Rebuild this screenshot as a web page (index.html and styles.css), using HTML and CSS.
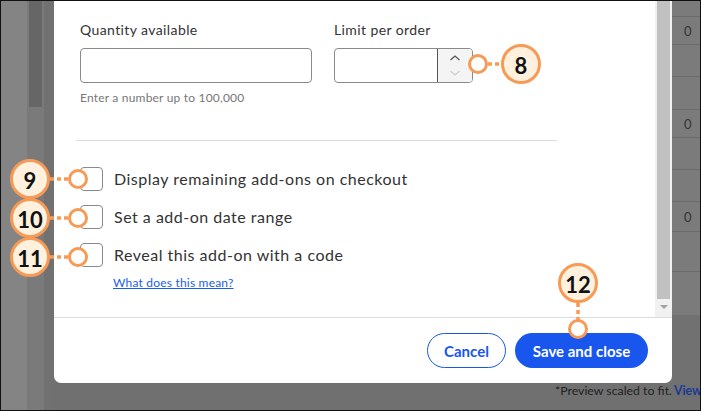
FILE: index.html
```html
<!DOCTYPE html>
<html>
<head>
<meta charset="utf-8">
<link rel="stylesheet" href="styles.css">
</head>
<body>
<div class="page">
  <div class="left">
    <div class="stripe-a"></div>
    <div class="stripe-b"><div class="bar"></div></div>
    <div class="stripe-c"></div>
  </div>
  <div class="main">
    <div class="top">
      <div class="modal">
        <div class="scroll">
          <div class="content">
            <div class="fields">
              <div class="field qty">
                <label class="label">Quantity available</label>
                <div class="input"></div>
                <div class="help">Enter a number up to 100,000</div>
              </div>
              <div class="field limit">
                <label class="label">Limit per order</label>
                <div class="input number">
                  <div class="num-value"></div>
                  <div class="spinner">
                    <svg class="chev" width="12" height="8" viewBox="0 0 12 8"><path d="M1.5 6 L6 2 L10.5 6" fill="none" stroke="#555" stroke-width="1.3"/></svg>
                    <svg class="chev" width="12" height="8" viewBox="0 0 12 8"><path d="M1.5 2 L6 6 L10.5 2" fill="none" stroke="#cfcfcf" stroke-width="1.3"/></svg>
                  </div>
                </div>
              </div>
            </div>
            <div class="divider"></div>
            <div class="checks">
              <div class="check-row"><span class="box"></span><span class="check-label">Display remaining add-ons on checkout</span></div>
              <div class="check-row"><span class="box"></span><span class="check-label">Set a add-on date range</span></div>
              <div class="check-row"><span class="box"></span><span class="check-label">Reveal this add-on with a code</span></div>
            </div>
            <a class="link">What does this mean?</a>
          </div>
          <div class="scrollbar">
            <div class="thumb"></div>
            <div class="arrow"></div>
          </div>
        </div>
        <div class="footer">
          <button class="btn cancel">Cancel</button>
          <button class="btn save">Save and close</button>
        </div>
      </div>
      <div class="side">
        <div class="table">
          <div class="row r1"></div>
          <div class="row r2">0</div>
          <div class="row r3"></div>
          <div class="row r4"></div>
          <div class="row r5">0</div>
          <div class="row r6"></div>
          <div class="row r7"></div>
          <div class="row r8">0</div>
          <div class="row r9"></div>
        </div>
      </div>
    </div>
    <div class="caption">*Preview scaled to fit.<b>View</b></div>
  </div>
</div>
<svg class="callouts" width="701" height="411" viewBox="0 0 701 411">
  <g class="dash">
    <line x1="488" y1="64" x2="502" y2="64"/>
    <line x1="50" y1="179" x2="69" y2="179"/>
    <line x1="50" y1="218" x2="69" y2="218"/>
    <line x1="50" y1="257" x2="69" y2="257"/>
    <line x1="578" y1="303" x2="578" y2="320"/>
  </g>
  <g class="small">
    <circle cx="478" cy="64" r="8.5"/>
    <circle cx="78" cy="179" r="8.5"/>
    <circle cx="78" cy="218" r="8.5"/>
    <circle cx="78" cy="257" r="8.5"/>
    <circle cx="578" cy="329" r="8.5"/>
  </g>
  <g class="big">
    <circle cx="521" cy="64" r="18.5"/>
    <circle cx="30" cy="179" r="18.5"/>
    <circle cx="30" cy="218" r="18.5"/>
    <circle cx="30" cy="257" r="18.5"/>
    <circle cx="578" cy="283" r="18.5"/>
  </g>
  <g class="nums">
    <text x="521" y="65">8</text>
    <text x="30" y="180">9</text>
    <text x="30" y="219">10</text>
    <text x="30" y="258">11</text>
    <text x="578" y="284">12</text>
  </g>
</svg>
</body>
</html>
```
FILE: styles.css
```css
* { box-sizing: border-box; }
html, body { margin: 0; padding: 0; }
body {
  width: 701px;
  height: 411px;
  overflow: hidden;
  position: relative;
  border: 1px solid #111;
  background: #707070;
  font-family: Lato, "Liberation Sans", sans-serif;
  color: #333;
}
.page {
  display: flex;
  width: 699px;
  height: 409px;
}
.left {
  display: flex;
  width: 53px;
  height: 100%;
  flex: none;
}
.stripe-a { width: 26px; background: #848484; }
.stripe-b { width: 17px; background: #7a7a7a; padding: 0 2px; }
.stripe-b .bar { height: 106px; background: #666; }
.stripe-c { width: 10px; background: #717171; }
.main {
  width: 646px;
  display: flex;
  flex-direction: column;
}
.top {
  display: flex;
  height: 382px;
}
.modal {
  width: 618px;
  height: 382px;
  background: #fff;
  border-radius: 0 0 7px 7px;
  display: flex;
  flex-direction: column;
  overflow: hidden;
}
.scroll {
  display: flex;
  height: 316px;
  flex: none;
}
.content {
  flex: 1;
  padding: 20px 0 0 26px;
}
.fields {
  display: flex;
  gap: 22px;
}
.field { display: flex; flex-direction: column; }
.qty { width: 232px; }
.limit { width: 139px; }
.label {
  font-size: 14px;
  line-height: 18px;
  letter-spacing: 0.4px;
  color: #333;
  margin-bottom: 9px;
}
.input {
  height: 35px;
  border: 1px solid #8a8a8a;
  border-radius: 4px;
}
.number {
  display: flex;
  overflow: hidden;
}
.num-value { flex: 1; }
.spinner {
  width: 35px;
  border-left: 1px solid #555;
  background: #f4f4f4;
  display: flex;
  flex-direction: column;
  align-items: center;
  justify-content: center;
  gap: 7px;
}
.chev { display: block; }
.help {
  font-size: 12px;
  line-height: 14px;
  letter-spacing: 0.2px;
  color: #777;
  margin-top: 8px;
}
.divider {
  margin: 35px 0 0 -4px;
  width: 481px;
  height: 1px;
  background: #dcdcdc;
}
.checks {
  margin-top: 26px;
  display: flex;
  flex-direction: column;
  gap: 14px;
}
.check-row {
  display: flex;
  align-items: center;
  gap: 11px;
  height: 24px;
}
.box {
  width: 23px;
  height: 24px;
  border: 1px solid #8a8a8a;
  border-radius: 4px;
  flex: none;
}
.check-label {
  font-size: 16px;
  line-height: 20px;
  letter-spacing: 0.5px;
  color: #333;
  margin-top: -1px;
}
.link {
  display: inline-block;
  margin: 9px 0 0 33px;
  font-size: 12px;
  line-height: 14px;
  letter-spacing: 0.2px;
  color: #1a5ee8;
  text-decoration: underline;
}
.scrollbar {
  width: 17px;
  background: #f1f1f1;
  position: relative;
  padding: 0 2px;
}
.thumb {
  height: 298px;
  background: #c1c1c1;
}
.arrow {
  margin: 6px auto 0;
  width: 0;
  height: 0;
  border-left: 4px solid transparent;
  border-right: 4px solid transparent;
  border-top: 4px solid #a3a3a3;
}
.footer {
  border-top: 1px solid #dcdcdc;
  flex: 1;
  display: flex;
  justify-content: flex-end;
  align-items: flex-start;
  gap: 9px;
  padding: 15px 24px 0 0;
}
.btn {
  height: 35px;
  border-radius: 18px;
  font-family: Lato, "Liberation Sans", sans-serif;
  font-weight: 700;
  font-size: 15px;
  cursor: pointer;
}
.cancel {
  width: 79px;
  background: #fff;
  border: 1px solid #1856ed;
  color: #1856ed;
}
.save {
  width: 133px;
  background: #1856ed;
  border: none;
  color: #fff;
}
.side {
  width: 28px;
  background: #717171;
}
.table {
  height: 314px;
  background: #7b7b7b;
}
.row {
  border-bottom: 1px solid #6b6b6b;
  font-size: 13px;
  color: #333;
  padding-left: 12px;
  display: flex;
  align-items: center;
}
.r1 { height: 16px; }
.r2 { height: 28px; }
.r3 { height: 32px; }
.r4 { height: 33px; }
.r5 { height: 28px; }
.r6 { height: 32px; }
.r7 { height: 32px; }
.r8 { height: 30px; }
.r9 { height: 40px; }
.caption {
  height: 27px;
  padding: 0 0 0 501px;
  line-height: 15px;
  white-space: nowrap;
  overflow: hidden;
  font-size: 12.3px;
  color: #222;
}
.caption b {
  color: #1b3a94;
  margin-left: 2px;
}
.callouts {
  position: absolute;
  left: -1px;
  top: -1px;
  pointer-events: none;
}
.dash line {
  stroke: #f79a55;
  stroke-width: 3.5;
  stroke-dasharray: 4 3;
}
.small circle {
  fill: #fff;
  stroke: #f79a55;
  stroke-width: 3;
}
.big circle {
  fill: #fff1de;
  stroke: #f79a55;
  stroke-width: 3;
}
.nums text {
  font-family: Lato, "Liberation Sans", sans-serif;
  font-weight: 700;
  font-size: 22px;
  fill: #111;
  text-anchor: middle;
  dominant-baseline: central;
}
```
